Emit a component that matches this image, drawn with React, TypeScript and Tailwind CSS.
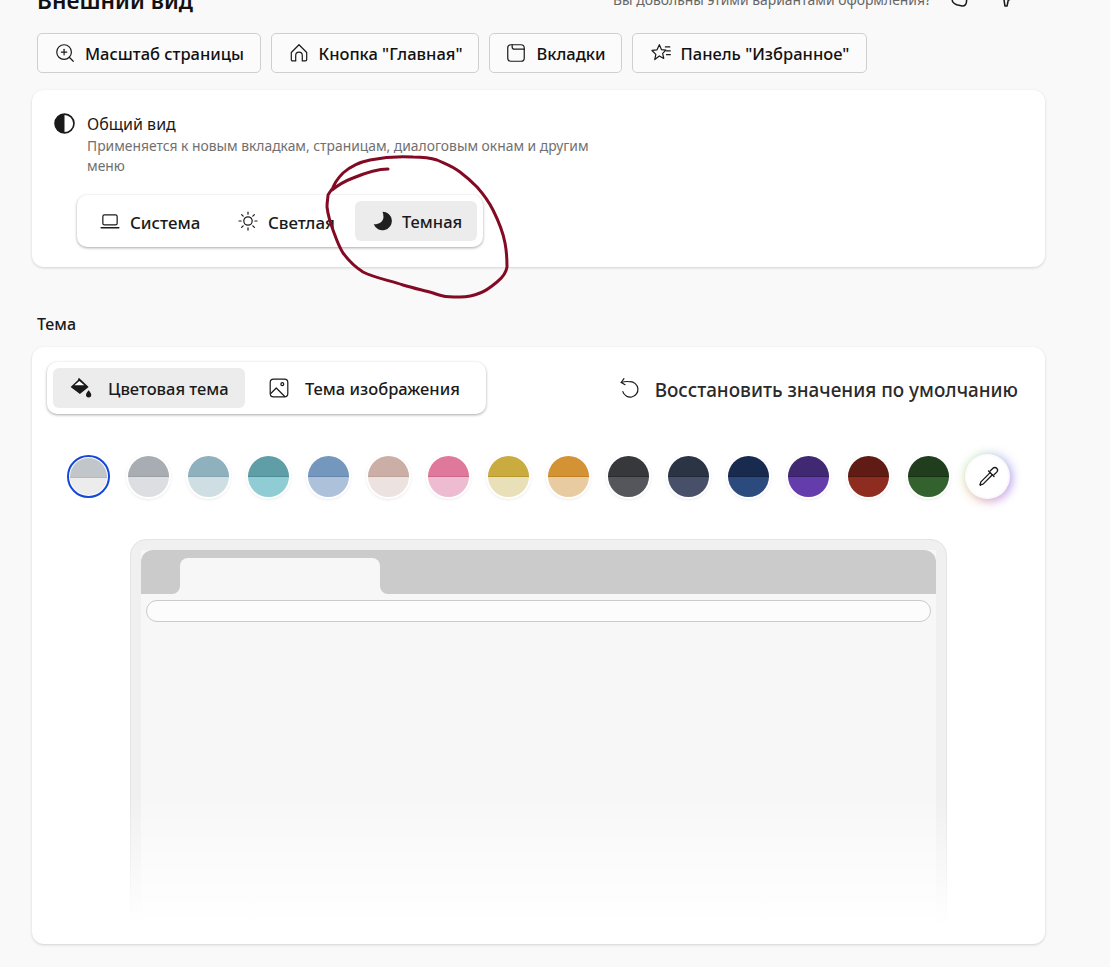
import { ZoomIn } from 'lucide-react';
import type { ReactNode } from 'react';

const swatches = [
  { top: 'bg-[#c1c6ca] border-[#b5babe]', bottom: 'bg-[#ececec]' },
  { top: 'bg-[#a8adb4] border-[#9ba0a7]', bottom: 'bg-[#dcdee2]' },
  { top: 'bg-[#8fb1bd] border-[#83a5b1]', bottom: 'bg-[#cfdee3]' },
  { top: 'bg-[#5f9ea7] border-[#4d8d96]', bottom: 'bg-[#90ccd4]' },
  { top: 'bg-[#7498bd] border-[#6488ad]', bottom: 'bg-[#adc1da]' },
  { top: 'bg-[#cbafa7] border-[#bfa39b]', bottom: 'bg-[#ece3e1]' },
  { top: 'bg-[#e0789c] border-[#cc668a]', bottom: 'bg-[#edbcd0]' },
  { top: 'bg-[#c9ab3f] border-[#b89a2a]', bottom: 'bg-[#e9dfb8]' },
  { top: 'bg-[#d39233] border-[#c28020]', bottom: 'bg-[#e8cba0]' },
  { top: 'bg-[#36383c] border-[#2a2c30]', bottom: 'bg-[#54565b]' },
  { top: 'bg-[#2b3445] border-[#222a38]', bottom: 'bg-[#475068]' },
  { top: 'bg-[#182b4e] border-[#122240]', bottom: 'bg-[#2b4b7e]' },
  { top: 'bg-[#402873] border-[#352062]', bottom: 'bg-[#653cac]' },
  { top: 'bg-[#601c14] border-[#50160f]', bottom: 'bg-[#8e2c20]' },
  { top: 'bg-[#203d1d] border-[#183016]', bottom: 'bg-[#33622f]' },
];

function Icon({ children, className = 'h-[22px] w-[22px]' }: { children: ReactNode; className?: string }) {
  return (
    <svg viewBox="0 0 20 20" fill="none" stroke="currentColor" strokeWidth="1.1" strokeLinecap="round" strokeLinejoin="round" className={`${className} shrink-0 text-[#1a1a1a]`}>
      {children}
    </svg>
  );
}

function LinkButton({ icon, label, width }: { icon: ReactNode; label: string; width: string }) {
  return (
    <button className={`flex h-10 ${width} items-center justify-center gap-[9px] rounded-[5px] border border-[#cfcfcf] bg-[#fbfbfb] text-[16.5px] font-medium text-[#111]`}>
      {icon}
      <span className="pt-[3px]">{label}</span>
    </button>
  );
}

function Seg({ icon, label, active, className }: { icon: ReactNode; label: string; active?: boolean; className: string }) {
  return (
    <div className={`flex h-10 items-center rounded-[6px] font-medium text-[#1a1a1a] ${active ? 'bg-[#ececec]' : ''} ${className}`}>
      {icon}
      <span className="pt-[3px]">{label}</span>
    </div>
  );
}

export default function App() {
  return (
    <div className="relative h-[967px] w-[1110px] overflow-hidden bg-[#f9f9f9] font-['Noto_Sans',sans-serif]">
      <div className="ml-8 w-[1013px]">
        <div className="-mt-[11px] flex h-[26px] items-center justify-between pl-[5px]">
          <h1 className="-translate-y-px text-[22.7px] font-semibold leading-[26px] text-[#111]">Внешний вид</h1>
          <div className="mr-[28px] flex items-center text-[#666]">
            <span className="-translate-y-[2px] text-[13.9px] leading-[26px]">Вы довольны этими вариантами оформления?</span>
            <Icon className="ml-[18px] h-[22px] w-[22px] -translate-y-[6px]">
              <path d="M3 5v9c0 2 2 3 4 4l5 1c3 0 4-2 4-5 0-4-1-6-3-9" strokeWidth="1.4" />
            </Icon>
            <Icon className="ml-6 h-[22px] w-[22px] -translate-y-[6px]">
              <path d="M3 4l5 8 1 7h2l1-5 5-3V3" strokeWidth="1.4" />
            </Icon>
          </div>
        </div>

        <div className="mt-[18px] flex gap-[10px] pl-[5px]">
          <LinkButton
            width="w-[224px]"
            label="Масштаб страницы"
            icon={<ZoomIn className="h-[22px] w-[22px] text-[#1a1a1a]" strokeWidth={1.3} />}
          />
          <LinkButton
            width="w-[208px]"
            label={'Кнопка "Главная"'}
            icon={
              <Icon>
                <path d="M3 9.500 10 2.500l7 7V16a1.200 1.200 0 0 1-1.200 1.200H13v-5a3 3 0 0 0-6 0v5H4.200A1.200 1.200 0 0 1 3 16Z" />
              </Icon>
            }
          />
          <LinkButton
            width="w-[133px]"
            label="Вкладки"
            icon={
              <Icon>
                <rect x="2.500" y="2.500" width="15" height="15" rx="3" />
                <path d="M6.500 2.500v2A2 2 0 0 0 8.500 6.500h9" />
              </Icon>
            }
          />
          <LinkButton
            width="w-[235px]"
            label={'Панель "Избранное"'}
            icon={
              <Icon>
                <path d="M8.500 2.500 10.500 7l4 .4-3 3 1 4.600-4-2.300L4.300 16l1-4.800L1.800 7.700l4.600-.6Z" />
                <path d="M14 4.500h4M15 8h3.500M15 11.500h3.500" />
              </Icon>
            }
          />
        </div>

        <section className="mt-[17px] h-[177px] rounded-[12px] bg-white pl-[22px] pt-[23px] shadow-[0_1px_3px_rgba(0,0,0,0.16)]">
          <div className="flex items-start gap-3">
            <svg viewBox="0 0 20 20" className="h-[21px] w-[21px] shrink-0">
              <circle cx="10" cy="10" r="9" fill="white" stroke="#1a1a1a" strokeWidth="1.6" />
              <path d="M10 1a9 9 0 0 0 0 18Z" fill="#1a1a1a" />
            </svg>
            <div className="w-[505px]">
              <div className="text-[16px] leading-[23px] text-[#1a1a1a]">Общий вид</div>
              <p className="text-[13.85px] leading-[20px] text-[#707070]">
                Применяется к новым вкладкам, страницам, диалоговым окнам и другим меню
              </p>
            </div>
          </div>
          <div className="ml-[23px] mt-[19px] flex h-[52px] w-[406px] items-center rounded-[10px] bg-white pl-[6px] text-[16.9px] shadow-[0_1px_3px_rgba(0,0,0,0.35)]">
            <Seg
              className="w-[132px] gap-[9px] pl-[16px]"
              label="Система"
              icon={
                <Icon>
                  <rect x="3.500" y="4.500" width="13" height="9" rx="1.500" />
                  <path d="M2 16.200h16" strokeWidth="1.400" />
                </Icon>
              }
            />
            <Seg
              className="w-[140px] gap-[9px] pl-[22px]"
              label="Светлая"
              icon={
                <Icon>
                  <circle cx="10" cy="10" r="3.800" />
                  <path d="M10 1.800v2M10 16.200v2M1.800 10h2M16.200 10h2M4.200 4.200l1.400 1.400M14.400 14.400l1.400 1.400M4.200 15.800l1.400-1.400M14.400 5.600l1.400-1.400" />
                </Icon>
              }
            />
            <Seg
              active
              className="w-[122px] gap-[9px] pl-[16px] text-[16.5px]"
              label="Темная"
              icon={
                <svg viewBox="0 0 20 20" className="h-[22px] w-[22px] shrink-0">
                  <path d="M10.500 1.500a8.500 8.500 0 1 1-8 11.500c4.500.3 8.500-2.500 8.800-6 .1-2-.2-4-.8-5.500Z" fill="#1f1f1f" />
                </svg>
              }
            />
          </div>
        </section>

        <h2 className="mt-[46px] pl-[5px] text-[16px] font-medium leading-[22px] text-[#1a1a1a]">Тема</h2>

        <section className="mt-[12px] h-[597px] rounded-[12px] bg-white px-[15px] pt-[15px] shadow-[0_1px_3px_rgba(0,0,0,0.16)]">
          <div className="flex items-center justify-between">
            <div className="flex h-[52px] w-[439px] items-center rounded-[10px] bg-white pl-[6px] text-[16.5px] shadow-[0_1px_3px_rgba(0,0,0,0.35)]">
              <Seg
                active
                className="w-[192px] gap-[15px] pl-[16px]"
                label="Цветовая тема"
                icon={
                  <svg viewBox="0 0 22 22" className="h-[24px] w-[24px] shrink-0">
                    <path d="M9 1.500 10.500 3 18 10l-8 6.500L1.500 10 8 4Z" fill="#1a1a1a" />
                    <path d="M5 8.500 9.500 4.500 14 8.500Z" fill="white" />
                    <path d="M18 13c1.300 1.700 2.400 2.900 2.400 4.300a2.400 2.400 0 0 1-4.800 0c0-1.400 1.100-2.600 2.400-4.300Z" fill="#1a1a1a" />
                  </svg>
                }
              />
              <Seg
                className="w-[235px] gap-[15px] pl-[23px]"
                label="Тема изображения"
                icon={
                  <Icon>
                    <rect x="2" y="2" width="16" height="16" rx="3" />
                    <circle cx="13" cy="6.500" r="1.300" />
                    <path d="M2.500 15 7.500 10l7.500 7.500" />
                  </Icon>
                }
              />
            </div>
            <div className="mr-[12px] flex items-center gap-[14px] text-[18.9px] font-medium text-[#2a2a2a]">
              <Icon>
                <path d="M4.500 1.500 2 5l3.500 2" />
                <path d="M2 5c3-1 5-1.200 8-.7a7 7 0 1 1-6.500 9" />
              </Icon>
              <span className="pt-[4px]">Восстановить значения по умолчанию</span>
            </div>
          </div>

          <div className="mt-[41px] flex h-[43px] items-center gap-[17px] pl-[20px]">
            <div className="h-[43px] w-[43px] shrink-0 rounded-full border-2 border-[#1547d8] p-[1px]">
              <div className="h-full overflow-hidden rounded-full">
                <div className={`h-[20px] border-b ${swatches[0].top}`} />
                <div className={`h-[19px] ${swatches[0].bottom}`} />
              </div>
            </div>
            {swatches.slice(1).map((s) => (
              <div key={s.top} className="h-[43px] w-[43px] shrink-0 p-[1px]">
                <div className="h-[41px] w-[41px] overflow-hidden rounded-full shadow-[0_0_0_2px_white,0_1px_3px_2px_rgba(0,0,0,0.08)]">
                  <div className={`h-[21px] border-b ${s.top}`} />
                  <div className={`h-5 ${s.bottom}`} />
                </div>
              </div>
            ))}
            <div className="flex h-[41px] w-[41px] shrink-0 items-center justify-center rounded-full bg-white shadow-[0_0_0_2px_rgba(255,255,255,0.9),-3px_-3px_8px_rgba(120,220,120,0.25),5px_-2px_10px_rgba(110,110,240,0.3),-3px_5px_9px_rgba(240,180,110,0.3),4px_5px_9px_rgba(170,90,230,0.35)]">
              <svg viewBox="0 0 22 22" fill="none" stroke="#1a1a1a" strokeWidth="1.200" strokeLinejoin="round" strokeLinecap="round" className="h-[24px] w-[24px]">
                <path d="M13 5.500 15.500 3a2.400 2.400 0 0 1 3.500 3.500L16.500 9" />
                <path d="M11.500 5.500 16.500 10.500" />
                <path d="M13 7 4.500 15.500C4 16 4.500 17 3.500 18l.5.500C5 17.500 6 18 6.500 17.500L15 9" />
              </svg>
            </div>
          </div>

          <div className="relative ml-[83px] mt-[41px] h-[386px] w-[817px] rounded-t-[16px] border border-[#e4e4e4] bg-[#f0f0f0] px-[10px] pt-[10px]">
            <div className="h-full rounded-t-[12px] bg-[#f7f7f7]">
              <div className="flex h-11 bg-[#f7f7f7]">
                <div className="w-[39px] rounded-tl-[12px] rounded-br-[8px] bg-[#cbcbcb]" />
                <div className="w-[200px] bg-[#cbcbcb]">
                  <div className="mt-2 h-9 rounded-t-[8px] bg-[#f7f7f7]" />
                </div>
                <div className="flex-1 rounded-tr-[12px] rounded-bl-[8px] bg-[#cbcbcb]" />
              </div>
              <div className="mx-[5px] mt-[6px] h-[22px] rounded-full border border-[#cbcbcb] bg-[#fcfcfc]" />
            </div>
            <div className="absolute -inset-x-px bottom-0 -mb-px h-[130px] bg-gradient-to-b from-white/0 to-white" />
          </div>
        </section>
      </div>

      <svg viewBox="0 0 1110 967" fill="none" className="pointer-events-none absolute inset-0 h-[967px] w-[1110px]">
        <path
          d="M388 169 C380 169 365 173 353 178 C345 181 337 186 332 190 C334 184 338 178 343 173 C352 165 360 162 370 160 C380 158 398 156 413 157 C425 157 431 158 437 160 C448 165 452 166 460 172 C468 178 472 182 477 187 C485 196 489 202 493 210 C499 222 503 232 505 243 C507 253 507 260 507 267 C506 274 502 278 497 282 C491 287 486 291 480 293 C473 296 467 297 460 297 C452 297 447 297 443 296 C438 295 436 294 433 293 C422 290 413 288 403 285 C388 280 375 278 363 272 C355 267 349 261 343 253 C338 245 336 238 333 230 C330 222 328 215 327 207 C327 201 328 198 328 195 C330 192 331 190 333 188"
          stroke="#820a24"
          strokeWidth="3"
          strokeLinecap="round"
          strokeLinejoin="round"
        />
      </svg>
    </div>
  );
}
